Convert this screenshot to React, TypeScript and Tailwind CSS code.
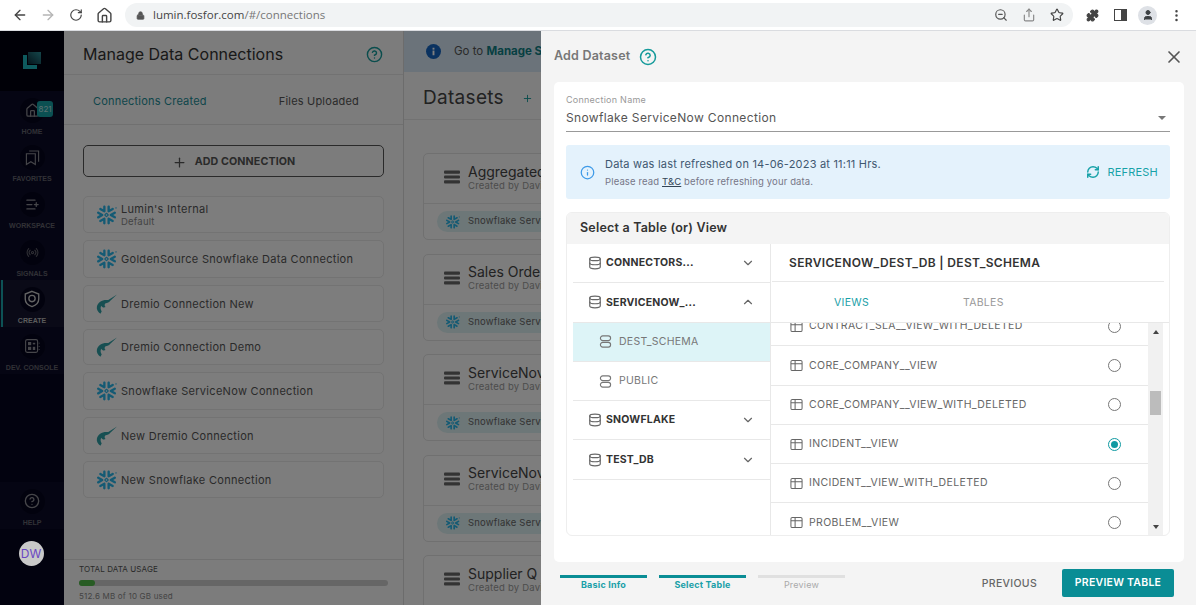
import { ArrowLeft, ArrowRight, RotateCw, Home, Lock, ZoomOut, Star, Puzzle, EllipsisVertical, User, Plus, CircleHelp, Info, RefreshCw, X, ChevronDown, ChevronUp, Database, ListPlus, Radio, Share } from "lucide-react"
import { SiSnowflake } from "react-icons/si"

const connections = [
  { name: "Lumin's Internal", sub: "Default", kind: "snow", h: "h-[37px]" },
  { name: "GoldenSource Snowflake Data Connection", kind: "snow", h: "h-[38px]" },
  { name: "Dremio Connection New", kind: "dremio", h: "h-[37px]" },
  { name: "Dremio Connection Demo", kind: "dremio", h: "h-[36px]" },
  { name: "Snowflake ServiceNow Connection", kind: "snow", h: "h-[38px]" },
  { name: "New Dremio Connection", kind: "dremio", h: "h-[37px]" },
  { name: "New Snowflake Connection", kind: "snow", h: "h-[37px]" },
]

const datasets = ["Aggregated", "Sales Orde", "ServiceNov", "ServiceNov", "Supplier Q"]

const views = [
  { name: "CONTRACT_SLA__VIEW_WITH_DELETED" },
  { name: "CORE_COMPANY__VIEW" },
  { name: "CORE_COMPANY__VIEW_WITH_DELETED" },
  { name: "INCIDENT__VIEW", selected: true },
  { name: "INCIDENT__VIEW_WITH_DELETED" },
  { name: "PROBLEM__VIEW" },
]

function Dremio() {
  return (
    <svg viewBox="0 0 24 24" className="w-[22px] h-[22px] text-[#2f9ea5]" fill="currentColor">
      <path d="M24 1 14 7.500C8 6.500 2 9.500 1 15c-.5 3 1 6 4 8l1.500-2.500C5 18 5 16 6 14c1 2 3 2.500 5 1.500-1.500-1.500-1.500-3.500 0-4.500 2 0 4-1 5-2.500z" />
    </svg>
  )
}

function SchemaIcon() {
  return (
    <svg viewBox="0 0 14 14" className="w-[13px] h-[13px] text-[#777]" fill="none" stroke="currentColor" strokeWidth="1.200">
      <rect x="1.500" y="1" width="11" height="5" rx="2.500" />
      <rect x="1.500" y="8" width="11" height="5" rx="2.500" />
    </svg>
  )
}

function TableIcon() {
  return (
    <svg viewBox="0 0 14 14" className="w-[13px] h-[13px] text-[#666] shrink-0" fill="none" stroke="currentColor" strokeWidth="1.100">
      <rect x="1" y="1.500" width="12" height="11" rx="1.500" />
      <path d="M1 5h12M5.500 1.500v11" />
    </svg>
  )
}

function RowsIcon() {
  return (
    <svg viewBox="0 0 16 14" className="w-[16px] h-[14px] text-[#666]" fill="currentColor">
      <rect x="0" y="0.500" width="16" height="3.200" rx="1" />
      <rect x="0" y="5.400" width="16" height="3.200" rx="1" />
      <rect x="0" y="10.300" width="16" height="3.200" rx="1" />
    </svg>
  )
}

function BannerInfo() {
  return (
    <svg viewBox="0 0 16 16" className="w-[15px] h-[15px] shrink-0">
      <circle cx="8" cy="8" r="8" fill="#1565c0" />
      <rect x="7" y="7" width="2" height="5" fill="#fff" />
      <rect x="7" y="4" width="2" height="2" fill="#fff" />
    </svg>
  )
}

function FavoritesIcon() {
  return (
    <svg viewBox="0 0 16 18" className="w-[15px] h-[17px]" fill="none" stroke="currentColor" strokeWidth="1.200">
      <path d="M1.500 5h9.500v11.500l-4.750-3-4.750 3z" />
      <path d="M4.500 2h10v11.500" />
    </svg>
  )
}

function ShieldIcon() {
  return (
    <svg viewBox="0 0 20 20" className="w-[18px] h-[18px]" fill="none" stroke="currentColor" strokeWidth="1.500">
      <path d="M10 1.500 17.500 4.500V10c0 4-3.200 7-7.500 8.500C5.700 17 2.500 14 2.500 10V4.500z" />
      <circle cx="10" cy="9.500" r="3.500" />
    </svg>
  )
}

function ConsoleIcon() {
  return (
    <svg viewBox="0 0 20 20" className="w-[16px] h-[16px]" fill="none" stroke="currentColor" strokeWidth="1.400">
      <rect x="2" y="2" width="15" height="16" rx="2" />
      <rect x="5" y="5" width="4" height="4" fill="currentColor" stroke="none" />
      <rect x="5" y="11" width="4" height="4" fill="currentColor" stroke="none" />
      <rect x="11" y="6" width="3" height="2" fill="currentColor" stroke="none" />
      <rect x="11" y="11" width="3" height="4" fill="currentColor" stroke="none" />
      <path d="M19 6v1M19 10v1M19 14v1" />
    </svg>
  )
}

function Logo() {
  return (
    <svg viewBox="0 0 18 18" className="w-[18px] h-[18px]">
      <defs>
        <linearGradient id="lg" x1="0" y1="1" x2="1" y2="0">
          <stop offset="0" stopColor="#0b2a38" />
          <stop offset="1" stopColor="#2a8d96" />
        </linearGradient>
      </defs>
      <path d="M0 3h4v10h10v4H0z" fill="#1cb5bd" />
      <rect x="5" y="0" width="13" height="12" fill="url(#lg)" />
    </svg>
  )
}

function NavItem({ label, icon, active, dim }: { label: string; icon: React.ReactNode; active?: boolean; dim?: boolean }) {
  return (
    <div className={`relative h-[47.200px] flex flex-col items-center justify-start pt-[7px] ${active ? "bg-[#14142e]" : "bg-[#0b0b26]"}`}>
      {active && <div className="absolute left-[1px] top-0 bottom-0 w-[2px] bg-[#1aa5ab]" />}
      <div className={`w-[25px] h-[25px] rounded-full bg-[#05051c] flex items-center justify-center ${active ? "text-[#c8c8c8]" : dim ? "text-[#5d5d68]" : "text-[#8c8c94]"}`}>
        {icon}
      </div>
      <div className={`mt-[4px] text-[7px] font-bold leading-[9px] font-['Liberation_Sans',sans-serif] whitespace-nowrap ${active ? "text-[#b8b8b8]" : "text-[#62626c]"}`}>
        {label}
      </div>
    </div>
  )
}

export default function App() {
  return (
    <div className="w-[1196px] h-[605px] overflow-hidden flex flex-col bg-white font-['Inter',sans-serif]">
      {/* browser bar */}
      <div className="h-[31px] shrink-0 flex items-center bg-white border-b border-[#dadce0] pl-[12px] text-[#5f6368]">
        <ArrowLeft className="w-[16px] h-[16px] text-[#444]" />
        <ArrowRight className="w-[16px] h-[16px] ml-[12px] text-[#b5b5b5]" />
        <RotateCw className="w-[14px] h-[14px] ml-[13px] text-[#444]" />
        <Home className="w-[17px] h-[17px] ml-[13px] text-[#444]" />
        <div className="ml-[12px] w-[948px] h-[24px] rounded-full bg-[#f1f3f4] flex items-center pl-[11px] pr-[9px]">
          <Lock className="w-[9px] h-[9px] text-[#555] fill-[#555]" />
          <span className="ml-[8px] text-[11.500px] font-['Open_Sans',sans-serif] text-[#444]">
            lumin.fosfor.com<span className="text-[#777]">/#/connections</span>
          </span>
          <ZoomOut className="ml-auto w-[14px] h-[14px] text-[#555]" />
          <Share className="ml-[14px] w-[14px] h-[14px] text-[#888]" />
          <Star className="ml-[14px] w-[14px] h-[14px] text-[#444]" />
        </div>
        <Puzzle className="ml-[13px] w-[13px] h-[13px] text-[#444] fill-[#444]" />
        <div className="ml-[15px] w-[13px] h-[12px] border-[1.500px] border-[#444] flex justify-end">
          <div className="w-[5px] h-full bg-[#444]" />
        </div>
        <div className="ml-[11px] w-[19px] h-[19px] rounded-full bg-[#dee1e6] flex items-center justify-center">
          <User className="w-[12px] h-[12px] text-[#3c4043] fill-[#3c4043]" />
        </div>
        <EllipsisVertical className="ml-[12px] w-[15px] h-[15px] text-[#444]" />
      </div>

      <div className="relative flex-1 flex min-h-0">
        {/* sidebar */}
        <div className="w-[64px] shrink-0 flex flex-col bg-[#04041f]">
          <div className="h-[60px] flex items-center justify-center bg-[#00000f] pb-[1px]">
            <Logo />
          </div>
          <div className="relative">
            <NavItem label="HOME" icon={<Home className="w-[15px] h-[15px]" />} />
            <div className="absolute left-[37px] top-[10px] w-[16px] h-[16px] rounded-[3px] bg-[#16a0a5] text-[8px] leading-[16px] text-center text-white/70">821</div>
          </div>
          <NavItem label="FAVORITES" icon={<FavoritesIcon />} />
          <NavItem label="WORKSPACE" icon={<ListPlus className="w-[15px] h-[15px]" />} />
          <NavItem label="SIGNALS" dim icon={<Radio className="w-[13px] h-[13px]" />} />
          <NavItem active label="CREATE" icon={<ShieldIcon />} />
          <NavItem label="DEV. CONSOLE" icon={<ConsoleIcon />} />
          <div className="mt-auto">
            <NavItem label="HELP" icon={<CircleHelp className="w-[16px] h-[16px]" />} />
          </div>
          <div className="h-[76px] pt-[12px] flex justify-center">
            <div className="relative z-10 w-[25px] h-[25px] rounded-full bg-[#c9c9c9] text-[#6a46c2] text-[12px] leading-[25px] text-center -ml-[2px]">DW</div>
          </div>
        </div>

        {/* connections panel */}
        <div className="w-[340px] shrink-0 flex flex-col bg-[#f8f8f8] border-r border-[#d8d8d8]">
          <div className="h-[44px] shrink-0 flex items-center justify-between pl-[19px] pr-[20px] pt-[3px] border-b border-[#e4e4e4]">
            <span className="text-[16px] text-[#333]">Manage Data Connections</span>
            <CircleHelp className="w-[17px] h-[17px] text-[#149a9a]" />
          </div>
          <div className="h-[50px] shrink-0 flex items-center pt-[4px] text-[11px] tracking-[0.2px] border-b border-[#e0e0e0]">
            <span className="ml-[29px] text-[#1c8d96]">Connections Created</span>
            <span className="ml-[72px] text-[#555]">Files Uploaded</span>
          </div>
          <div className="px-[19px] pt-[20px]">
            <div className="h-[32px] pt-[2px] rounded-[5px] border border-[#555] flex items-center justify-center gap-[8px] text-[#555]">
              <Plus className="w-[15px] h-[15px]" />
              <span className="text-[10.700px] font-bold tracking-[0.1px]">ADD CONNECTION</span>
            </div>
            <div className="mt-[19px] flex flex-col gap-[7px]">
              {connections.map((c) => (
                <div key={c.name} className={`${c.h} rounded-[5px] border border-[#e6e6e6] bg-[#fbfbfb] flex items-center pl-[12px] gap-[4px]`}>
                  <div className="w-[21px] flex justify-center">
                    {c.kind === "snow" ? <SiSnowflake className="w-[20px] h-[20px] text-[#29b5e8]" /> : <Dremio />}
                  </div>
                  <div>
                    <div className="text-[11px] leading-[14px] tracking-[0.3px] text-[#555]">{c.name}</div>
                    {c.sub && <div className="text-[9.500px] leading-[12px] tracking-[0.2px] text-[#888]">{c.sub}</div>}
                  </div>
                </div>
              ))}
            </div>
          </div>
          <div className="mt-auto h-[46px] border-t border-[#e0e0e0] px-[15px] pt-[4px]">
            <div className="text-[8px] leading-[10px] tracking-[0.1px] text-[#555]">TOTAL DATA USAGE</div>
            <div className="mt-[6px] h-[6px] rounded-full bg-[#cdcdcd]">
              <div className="w-[16px] h-full rounded-full bg-[#50b848]" />
            </div>
            <div className="mt-[5px] text-[8px] leading-[10px] tracking-[0.2px] text-[#888]">512.6 MB of 10 GB used</div>
          </div>
        </div>

        {/* datasets behind the drawer */}
        <div className="w-[137px] shrink-0 flex flex-col bg-[#f8f8f8]">
          <div className="h-[41px] shrink-0 bg-[#d7e7f4] flex items-center pl-[22px] text-[11.500px] whitespace-nowrap text-[#555]">
            <BannerInfo />
            <span className="ml-[13px]">Go to <b className="text-[#0f7f85]">Manage S</b></span>
          </div>
          <div className="h-[48px] shrink-0 flex items-center pl-[19px] pt-[5px] border-b border-[#e4e4e4] whitespace-nowrap">
            <span className="text-[19px] tracking-[0.3px] text-[#444]">Datasets</span>
            <Plus className="ml-[18px] w-[11px] h-[11px] shrink-0 text-[#149a9a]" />
          </div>
          <div className="pl-[19px] pt-[33px] flex flex-col gap-[13.500px]">
            {datasets.map((d, i) => (
              <div key={i} className="w-[300px] h-[87px] shrink-0 rounded-[5px] border border-[#e0e0e0] bg-[#fafafa]">
                <div className="h-[50px] pb-[3px] border-b border-[#e4e4e4] flex items-center pl-[20px] gap-[8px]">
                  <RowsIcon />
                  <div className="whitespace-nowrap">
                    <div className="text-[14px] leading-[16px] text-[#444]">{d}</div>
                    <div className="text-[9.500px] leading-[11px] tracking-[0.2px] text-[#999]">Created by David</div>
                  </div>
                </div>
                {i < 4 && (
                  <div className="pl-[13px] pt-[7px]">
                    <div className="w-[200px] h-[21px] rounded-full bg-[#daeef0] flex items-center pl-[9px] gap-[8px]">
                      <SiSnowflake className="w-[14px] h-[14px] text-[#29b5e8]" />
                      <span className="text-[9.500px] tracking-[0.2px] text-[#666] whitespace-nowrap">Snowflake Service</span>
                    </div>
                  </div>
                )}
              </div>
            ))}
          </div>
        </div>

        {/* dim layer */}
        <div className="absolute inset-0 bg-black/50" />

        {/* drawer */}
        <div className="absolute top-0 bottom-0 right-0 w-[655px] bg-[#f4f4f4] flex flex-col">
          <div className="h-[51px] shrink-0 flex items-center pl-[13px] pr-[12px]">
            <span className="text-[12.500px] font-semibold tracking-[0.2px] text-[#777]">Add Dataset</span>
            <CircleHelp className="ml-[9px] w-[18px] h-[18px] text-[#149a9a]" />
            <X className="ml-auto w-[20px] h-[20px] text-[#555]" />
          </div>

          <div className="mx-[13px] w-[630px] h-[480px] shrink-0 rounded-[5px] bg-white pl-[12px] pr-[14px] pt-[12px]">
            <div className="text-[9px] leading-[11px] tracking-[0.25px] text-[#999]">Connection Name</div>
            <div className="h-[27px] flex items-center border-b border-[#999] pb-[1px] pr-[4px]">
              <span className="text-[12px] tracking-[0.35px] text-[#555]">Snowflake ServiceNow Connection</span>
              <div className="ml-auto w-0 h-0 border-x-[4px] border-x-transparent border-t-[4px] border-t-[#777]" />
            </div>

            <div className="mt-[13px] h-[54px] rounded-[3px] bg-[#e4f2fc] flex items-center pl-[14px] pr-[12px]">
              <Info className="w-[15px] h-[15px] text-[#3d9ae8]" />
              <div className="ml-[10px]">
                <div className="text-[11px] leading-[14px] tracking-[0.2px] text-[#3f5870]">Data was last refreshed on 14-06-2023 at 11:11 Hrs.</div>
                <div className="mt-[5px] text-[9.500px] leading-[11px] tracking-[0.13px] text-[#778]">
                  Please read <span className="underline text-[#345]">T&amp;C</span> before refreshing your data.
                </div>
              </div>
              <RefreshCw strokeWidth={2.5} className="ml-auto w-[14px] h-[14px] text-[#17a2a8]" />
              <span className="ml-[7px] text-[11px] tracking-[0.2px] text-[#17a2a8]">REFRESH</span>
            </div>

            <div className="mt-[13px] h-[324px] flex flex-col rounded-[6px] border border-[#eeeeee] overflow-hidden">
              <div className="h-[31px] shrink-0 bg-[#f4f4f4] flex items-center pl-[13px] text-[12.500px] font-semibold tracking-[0.2px] text-[#333]">
                Select a Table (or) View
              </div>
              <div className="flex-1 min-h-0 flex">
                {/* tree */}
                <div className="w-[204px] shrink-0 border-r border-[#e8e8e8] pl-[6px]">
                  <TreeRow name="CONNECTORS..." />
                  <TreeRow name="SERVICENOW_..." open />
                  <div className="h-[39.300px] bg-[#ddf4f7] border-b border-[#e8e8e8] flex items-center pl-[26px] gap-[7px] text-[10.500px] tracking-[0.25px] text-[#777]">
                    <SchemaIcon />DEST_SCHEMA
                  </div>
                  <div className="h-[39.300px] border-b border-[#e8e8e8] flex items-center pl-[26px] gap-[7px] text-[10.500px] tracking-[0.25px] text-[#777]">
                    <SchemaIcon />PUBLIC
                  </div>
                  <TreeRow name="SNOWFLAKE" />
                  <TreeRow name="TEST_DB" />
                </div>

                {/* table list */}
                <div className="flex-1 min-w-0 flex flex-col">
                  <div className="ml-[1px] mr-[5px] h-[38px] shrink-0 border-b border-[#e8e8e8] flex items-center pl-[17px] text-[12px] font-semibold tracking-[0.34px] text-[#333]">
                    SERVICENOW_DEST_DB | DEST_SCHEMA
                  </div>
                  <div className="h-[40px] shrink-0 flex items-center pt-[1px] text-[10.500px] tracking-[0.3px]">
                    <span className="ml-[63px] text-[#1aa0a8]">VIEWS</span>
                    <span className="ml-[94px] text-[#999]">TABLES</span>
                  </div>
                  <div className="flex-1 min-h-0 flex border-t border-[#e8e8e8]">
                    <div className="flex-1 min-w-0 overflow-hidden">
                      <div className="-mt-[16px]">
                        {views.map((v) => (
                          <div key={v.name} className="h-[39.300px] border-b border-[#e8e8e8] flex items-center pl-[19px] pr-[27px] gap-[6px]">
                            <TableIcon />
                            <span className="text-[10.500px] tracking-[0.36px] text-[#666]">{v.name}</span>
                            <div className={`ml-auto w-[13px] h-[13px] rounded-full border-[1.500px] flex items-center justify-center ${v.selected ? "border-[#109aa2]" : "border-[#777]"}`}>
                              {v.selected && <div className="w-[7px] h-[7px] rounded-full bg-[#109aa2]" />}
                            </div>
                          </div>
                        ))}
                      </div>
                    </div>
                    <div className="w-[15px] shrink-0 bg-[#f1f1f1] flex flex-col items-center pt-[7px] pb-[6px]">
                      <div className="w-0 h-0 border-x-[3.500px] border-x-transparent border-b-[4px] border-b-[#444]" />
                      <div className="w-[11px] h-[24px] mt-[57px] bg-[#bcbcbc]" />
                      <div className="mt-auto w-0 h-0 border-x-[3.500px] border-x-transparent border-t-[4px] border-t-[#444]" />
                    </div>
                    <div className="w-[6px] shrink-0" />
                  </div>
                </div>
              </div>
            </div>
          </div>

          {/* stepper and actions */}
          <div className="flex-1 flex items-start pl-[19px] pr-[22px]">
            <div className="flex gap-[12px] pt-[13px]">
              <Step label="Basic Info" done />
              <Step label="Select Table" done />
              <Step label="Preview" />
            </div>
            <span className="ml-auto mt-[14px] text-[10.500px] font-medium tracking-[0.3px] text-[#666]">PREVIOUS</span>
            <div className="ml-[25px] mt-[7px] w-[112px] h-[28px] rounded-[2px] bg-[#0a8d95] flex items-center justify-center text-[10.500px] font-semibold tracking-[0.25px] text-white">
              PREVIEW TABLE
            </div>
          </div>
        </div>
      </div>
    </div>
  )
}

function TreeRow({ name, open }: { name: string; open?: boolean }) {
  return (
    <div className="h-[39.300px] border-b border-[#e8e8e8] flex items-center pl-[15px] pr-[15px] gap-[4px]">
      <Database className="w-[14px] h-[14px] text-[#666]" />
      <span className="text-[10.500px] font-bold tracking-[0.2px] text-[#333]">{name}</span>
      {open ? <ChevronUp className="ml-auto w-[14px] h-[14px] text-[#666]" /> : <ChevronDown className="ml-auto w-[14px] h-[14px] text-[#666]" />}
    </div>
  )
}

function Step({ label, done }: { label: string; done?: boolean }) {
  return (
    <div className="w-[87px] flex flex-col items-center">
      <div className={`w-full h-[3px] ${done ? "bg-[#0a8d95]" : "bg-[#e0e0e0]"}`} />
      <div className={`mt-[1px] text-[9px] leading-[12px] tracking-[0.2px] ${done ? "font-bold text-[#1aa0a8]" : "text-[#aaa]"}`}>{label}</div>
    </div>
  )
}
